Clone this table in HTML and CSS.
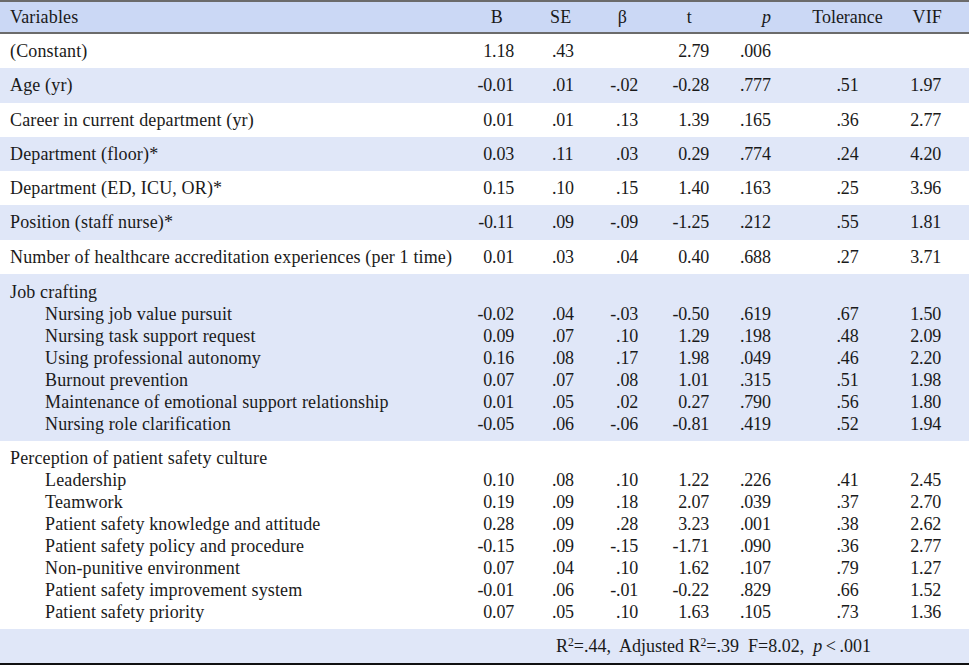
FILE: index.html
```html
<!DOCTYPE html>
<html>
<head>
<meta charset="utf-8">
<link rel="stylesheet" href="styles.css">
</head>
<body>
<table class="reg">
  <colgroup>
    <col class="c-var"><col class="c-b"><col class="c-se"><col class="c-beta"><col class="c-t"><col class="c-p"><col class="c-tol"><col class="c-vif">
  </colgroup>
  <thead>
    <tr>
      <th class="h-var">Variables</th>
      <th class="h-b">B</th>
      <th class="h-se">SE</th>
      <th class="h-beta">β</th>
      <th class="h-t">t</th>
      <th class="h-p"><i>p</i></th>
      <th class="h-tol">Tolerance</th>
      <th class="h-vif">VIF</th>
    </tr>
  </thead>
  <tbody>
    <tr class="row">
      <td class="var">(Constant)</td><td class="b">1.18</td><td class="se">.43</td><td class="beta"></td><td class="t">2.79</td><td class="p">.006</td><td class="tol"></td><td class="vif"></td>
    </tr>
    <tr class="row shade">
      <td class="var">Age (yr)</td><td class="b">-0.01</td><td class="se">.01</td><td class="beta">-.02</td><td class="t">-0.28</td><td class="p">.777</td><td class="tol">.51</td><td class="vif">1.97</td>
    </tr>
    <tr class="row">
      <td class="var">Career in current department (yr)</td><td class="b">0.01</td><td class="se">.01</td><td class="beta">.13</td><td class="t">1.39</td><td class="p">.165</td><td class="tol">.36</td><td class="vif">2.77</td>
    </tr>
    <tr class="row shade">
      <td class="var">Department (floor)*</td><td class="b">0.03</td><td class="se">.11</td><td class="beta">.03</td><td class="t">0.29</td><td class="p">.774</td><td class="tol">.24</td><td class="vif">4.20</td>
    </tr>
    <tr class="row">
      <td class="var">Department (ED, ICU, OR)*</td><td class="b">0.15</td><td class="se">.10</td><td class="beta">.15</td><td class="t">1.40</td><td class="p">.163</td><td class="tol">.25</td><td class="vif">3.96</td>
    </tr>
    <tr class="row shade">
      <td class="var">Position (staff nurse)*</td><td class="b">-0.11</td><td class="se">.09</td><td class="beta">-.09</td><td class="t">-1.25</td><td class="p">.212</td><td class="tol">.55</td><td class="vif">1.81</td>
    </tr>
    <tr class="row">
      <td class="var">Number of healthcare accreditation experiences (per 1 time)</td><td class="b">0.01</td><td class="se">.03</td><td class="beta">.04</td><td class="t">0.40</td><td class="p">.688</td><td class="tol">.27</td><td class="vif">3.71</td>
    </tr>
    <tr class="group shade g1">
      <td class="var">
        <div>Job crafting</div>
        <div class="sub">Nursing job value pursuit</div>
        <div class="sub">Nursing task support request</div>
        <div class="sub">Using professional autonomy</div>
        <div class="sub">Burnout prevention</div>
        <div class="sub">Maintenance of emotional support relationship</div>
        <div class="sub">Nursing role clarification</div>
      </td>
      <td class="b"><div>&nbsp;</div><div>-0.02</div><div>0.09</div><div>0.16</div><div>0.07</div><div>0.01</div><div>-0.05</div></td>
      <td class="se"><div>&nbsp;</div><div>.04</div><div>.07</div><div>.08</div><div>.07</div><div>.05</div><div>.06</div></td>
      <td class="beta"><div>&nbsp;</div><div>-.03</div><div>.10</div><div>.17</div><div>.08</div><div>.02</div><div>-.06</div></td>
      <td class="t"><div>&nbsp;</div><div>-0.50</div><div>1.29</div><div>1.98</div><div>1.01</div><div>0.27</div><div>-0.81</div></td>
      <td class="p"><div>&nbsp;</div><div>.619</div><div>.198</div><div>.049</div><div>.315</div><div>.790</div><div>.419</div></td>
      <td class="tol"><div>&nbsp;</div><div>.67</div><div>.48</div><div>.46</div><div>.51</div><div>.56</div><div>.52</div></td>
      <td class="vif"><div>&nbsp;</div><div>1.50</div><div>2.09</div><div>2.20</div><div>1.98</div><div>1.80</div><div>1.94</div></td>
    </tr>
    <tr class="group g2">
      <td class="var">
        <div>Perception of patient safety culture</div>
        <div class="sub">Leadership</div>
        <div class="sub">Teamwork</div>
        <div class="sub">Patient safety knowledge and attitude</div>
        <div class="sub">Patient safety policy and procedure</div>
        <div class="sub">Non-punitive environment</div>
        <div class="sub">Patient safety improvement system</div>
        <div class="sub">Patient safety priority</div>
      </td>
      <td class="b"><div>&nbsp;</div><div>0.10</div><div>0.19</div><div>0.28</div><div>-0.15</div><div>0.07</div><div>-0.01</div><div>0.07</div></td>
      <td class="se"><div>&nbsp;</div><div>.08</div><div>.09</div><div>.09</div><div>.09</div><div>.04</div><div>.06</div><div>.05</div></td>
      <td class="beta"><div>&nbsp;</div><div>.10</div><div>.18</div><div>.28</div><div>-.15</div><div>.10</div><div>-.01</div><div>.10</div></td>
      <td class="t"><div>&nbsp;</div><div>1.22</div><div>2.07</div><div>3.23</div><div>-1.71</div><div>1.62</div><div>-0.22</div><div>1.63</div></td>
      <td class="p"><div>&nbsp;</div><div>.226</div><div>.039</div><div>.001</div><div>.090</div><div>.107</div><div>.829</div><div>.105</div></td>
      <td class="tol"><div>&nbsp;</div><div>.41</div><div>.37</div><div>.38</div><div>.36</div><div>.79</div><div>.66</div><div>.73</div></td>
      <td class="vif"><div>&nbsp;</div><div>2.45</div><div>2.70</div><div>2.62</div><div>2.77</div><div>1.27</div><div>1.52</div><div>1.36</div></td>
    </tr>
    <tr class="row shade foot">
      <td class="var"></td>
      <td class="summary" colspan="7">R<sup>2</sup>=.44,&nbsp; Adjusted R<sup>2</sup>=.39&nbsp; F=8.02,&nbsp; <i>p</i>&#8201;&lt;&#8201;.001</td>
    </tr>
  </tbody>
</table>
</body>
</html>
```
FILE: styles.css
```css
html, body {
  margin: 0;
  padding: 0;
  background: #ffffff;
}

body {
  font-family: "Liberation Serif", "DejaVu Serif", serif;
  font-size: 18px;
  letter-spacing: 0.15px;
  color: #1a1a1a;
}

.reg {
  width: 969px;
  border-collapse: collapse;
  table-layout: fixed;
  border-bottom: 2px solid #111;
}

.c-var { width: 460px; }
.c-b { width: 70px; }
.c-se { width: 70px; }
.c-beta { width: 50px; }
.c-t { width: 70px; }
.c-p { width: 80px; }
.c-tol { width: 95px; }
.c-vif { width: 74px; }

thead tr {
  background: #cbd8f5;
  border-top: 2px solid #6b6b6b;
  border-bottom: 2px solid #6b6b6b;
}

th {
  font-weight: normal;
  height: 30px;
  padding: 0;
  line-height: 22px;
  white-space: nowrap;
}

.h-var { text-align: left; padding-left: 10px; }
.h-b { text-align: right; padding-right: 27px; }
.h-se { text-align: left; padding-left: 20px; }
.h-beta { text-align: right; padding-right: 23px; }
.h-t { text-align: right; padding-right: 28px; }
.h-p { text-align: left; padding-left: 42px; }
.h-tol { text-align: center; letter-spacing: 0; }
.h-vif { text-align: right; padding-right: 27px; }

td {
  padding: 0;
  line-height: 22px;
  white-space: nowrap;
  vertical-align: top;
}

.row td {
  padding-top: 6px;
  padding-bottom: 6.3px;
}

.g1 td {
  padding-top: 7px;
  padding-bottom: 6px;
}

.g2 td {
  padding-top: 6px;
  padding-bottom: 6px;
}

.shade {
  background: #e0e7f8;
}

.var { text-align: left; padding-left: 10px; }
.sub { padding-left: 35px; }
.b, .se, .beta, .t, .p, .tol, .vif { letter-spacing: -0.2px; }
.b { text-align: right; padding-right: 16px; }
.se { text-align: left; padding-left: 22px; }
.beta { text-align: right; padding-right: 12px; }
.t { text-align: right; padding-right: 11px; }
.p { text-align: left; padding-left: 20px; }
.tol { text-align: center; }
.vif { text-align: right; padding-right: 28px; }

.summary {
  text-align: center;
  padding-right: 2px;
  letter-spacing: 0;
}

sup {
  font-size: 0.65em;
  line-height: 0;
  vertical-align: 0.55em;
}
```
